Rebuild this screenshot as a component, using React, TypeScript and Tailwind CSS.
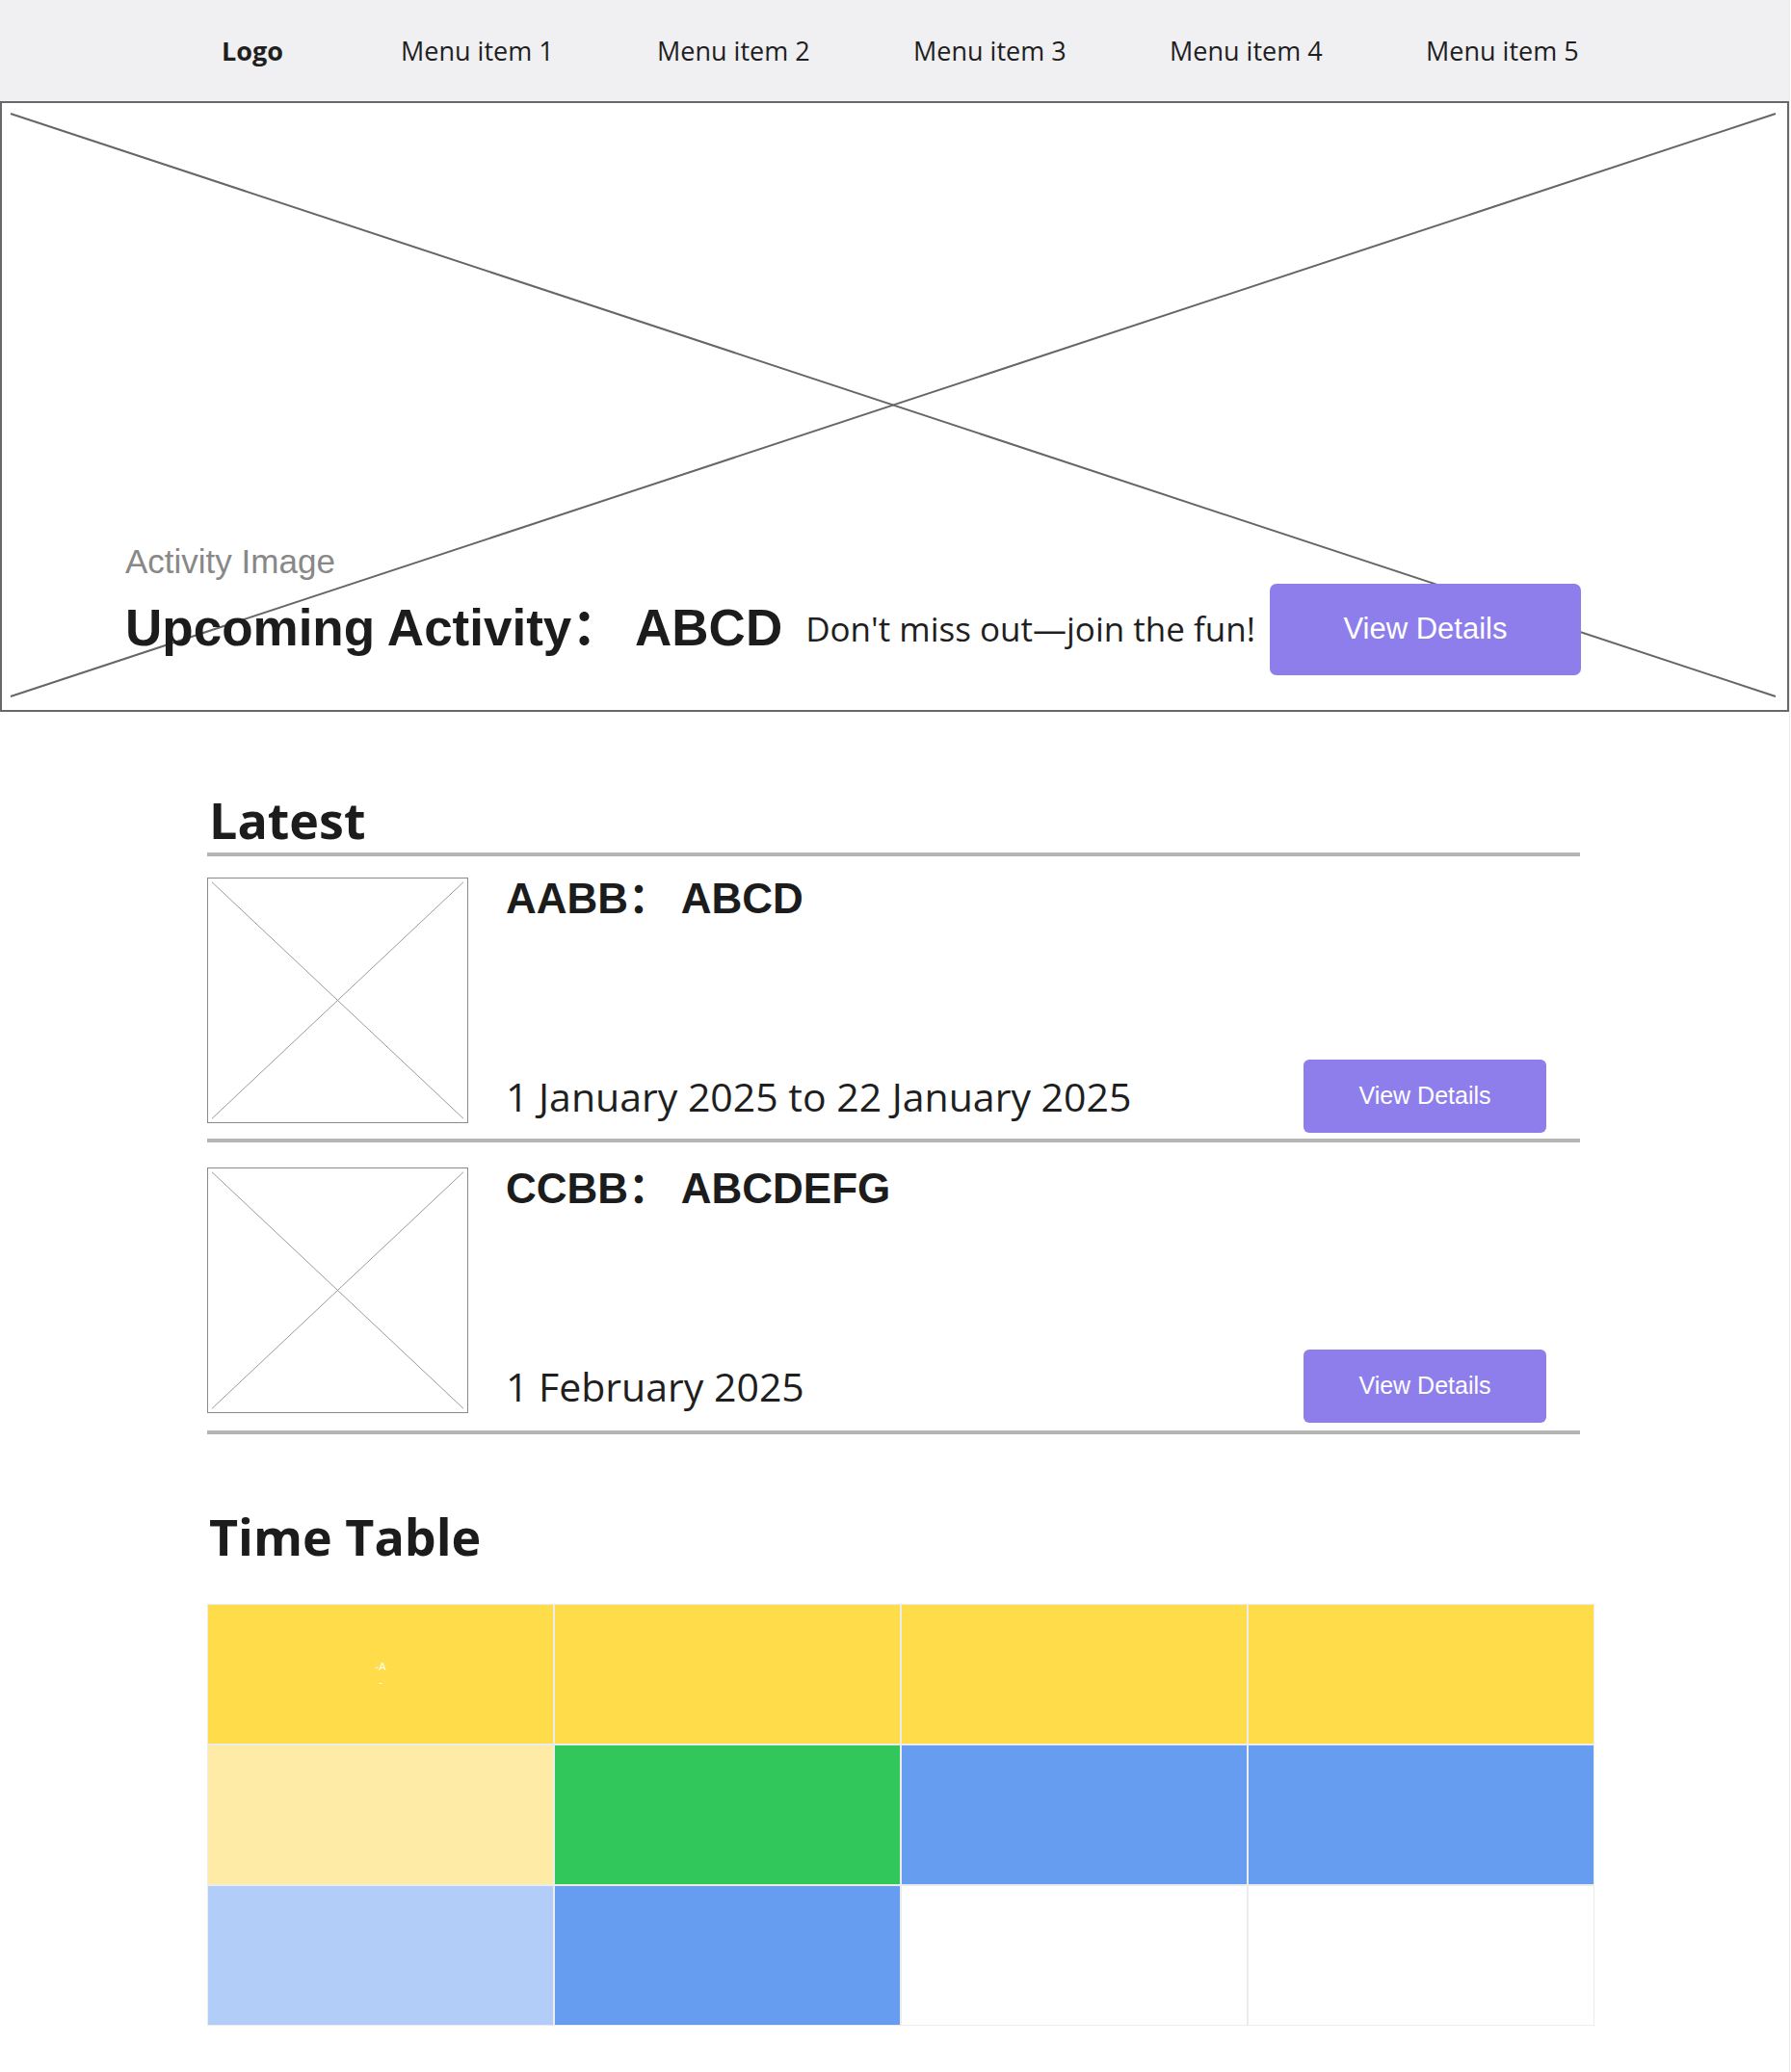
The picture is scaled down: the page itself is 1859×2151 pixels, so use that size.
import React from "react";

const open = "font-['Open_Sans',sans-serif]";
const arial = "font-['Liberation_Sans','Noto_Sans_CJK_SC',sans-serif]";

const menu = ["Menu item 1", "Menu item 2", "Menu item 3", "Menu item 4", "Menu item 5"];

const Cross = ({ stroke, width }: { stroke: string; width: number }) => (
  <svg className="absolute inset-0 w-full h-full" viewBox="0 0 100 100" preserveAspectRatio="none">
    <line x1="1.5" y1="1.5" x2="98.5" y2="98.5" stroke={stroke} strokeWidth={width} vectorEffect="non-scaling-stroke" />
    <line x1="98.5" y1="1.5" x2="1.5" y2="98.5" stroke={stroke} strokeWidth={width} vectorEffect="non-scaling-stroke" />
  </svg>
);

const LatestItem = ({ title, date, top, bottom }: { title: string; date: string; top: string; bottom: string }) => (
  <>
    <div className={`flex ${top} ${bottom}`}>
      <div className="relative w-[271px] h-[255px] border border-[#8a8a8a] shrink-0">
        <Cross stroke="#9a9a9a" width={1} />
      </div>
      <div className="ml-[39px] flex-1 h-[265px] flex flex-col justify-between">
        <h3 className={`${arial} font-bold text-[44px] leading-[44px] text-[#1c1c1c]`}>{title}</h3>
        <div className="flex items-center justify-between pr-[35px]">
          <span className={`${open} text-[41px] leading-[56px] text-[#1f1f1f]`}>{date}</span>
          <button className={`${arial} w-[252px] h-[76px] rounded-[6px] bg-[#8e7eec] text-white text-[25px]`}>
            View Details
          </button>
        </div>
      </div>
    </div>
    <div className="h-[4px] bg-[#b4b4b4]" />
  </>
);

const rows = [
  ["bg-[#ffdc4a]", "bg-[#ffdc4a]", "bg-[#ffdc4a]", "bg-[#ffdc4a]"],
  ["bg-[#feeba6]", "bg-[#31c75b]", "bg-[#669df0]", "bg-[#669df0]"],
  ["bg-[#b2cdf7]", "bg-[#669df0]", "bg-white", "bg-white"],
];

export default function App() {
  return (
    <div className="w-[1858px] min-h-[2151px] bg-white border-r border-[#ececec] pb-[49px]">
      <nav className={`${open} h-[105px] pt-[2px] bg-[#f0f0f2] flex items-center text-[27px] text-[#1f1f1f]`}>
        <div className="ml-[230px] w-[186px] font-bold">Logo</div>
        {menu.map((m) => (
          <div key={m} className="w-[266px]">
            {m}
          </div>
        ))}
      </nav>

      <section className="relative w-[1857px] h-[634px] border-2 border-[#686868] flex flex-col justify-end pl-[128px] pr-[214px] pb-[36px]">
        <svg className="absolute inset-0 w-full h-full" viewBox="0 0 1853 630">
          <line x1="9" y1="11" x2="1841" y2="616" stroke="#666" strokeWidth="2" />
          <line x1="1841" y1="11" x2="9" y2="616" stroke="#666" strokeWidth="2" />
        </svg>
        <div className={`${arial} relative text-[35px] leading-[40px] text-[#888] mb-[3px]`}>Activity Image</div>
        <div className="relative flex items-center">
          <h1 className={`${arial} font-bold text-[53px] leading-[60px] text-[#1c1c1c] whitespace-pre -mt-[3px]`}>
            Upcoming Activity： ABCD
          </h1>
          <p className={`${open} ml-[24px] text-[35px] text-[#1f1f1f]`}>Don't miss out—join the fun!</p>
          <button className={`${arial} ml-auto w-[323px] h-[95px] rounded-[7px] bg-[#8e7eec] text-white text-[31px]`}>
            View Details
          </button>
        </div>
      </section>

      <main className="ml-[215px] w-[1425px]">
        <h2 className={`${open} mt-[82px] ml-[2px] font-bold text-[52px] leading-[60px] text-[#1c1c1c]`}>Latest</h2>
        <div className="mt-[4px] h-[4px] bg-[#b4b4b4]" />
        <LatestItem title="AABB：  ABCD" date="1 January 2025 to 22 January 2025" top="pt-[22px]" bottom="pb-[6px]" />
        <LatestItem title="CCBB：  ABCDEFG" date="1 February 2025" top="pt-[26px]" bottom="pb-[8px]" />

        <h2 className={`${open} mt-[76px] ml-[2px] font-bold text-[52px] leading-[60px] text-[#1c1c1c]`}>Time Table</h2>
        <div className="mt-[40px] w-[1440px] grid grid-cols-4 gap-[2px] bg-[#ececec] border border-[#ececec]">
          {rows.flatMap((r, i) =>
            r.map((c, j) => (
              <div key={`${i}-${j}`} className={`${c} h-[144px] flex flex-col items-center justify-center`}>
                {i === 0 && j === 0 && (
                  <div className={`${arial} text-white text-[11px] leading-[16px] text-center`}>
                    <div>-A</div>
                    <div>-</div>
                  </div>
                )}
              </div>
            ))
          )}
        </div>
      </main>
    </div>
  );
}
